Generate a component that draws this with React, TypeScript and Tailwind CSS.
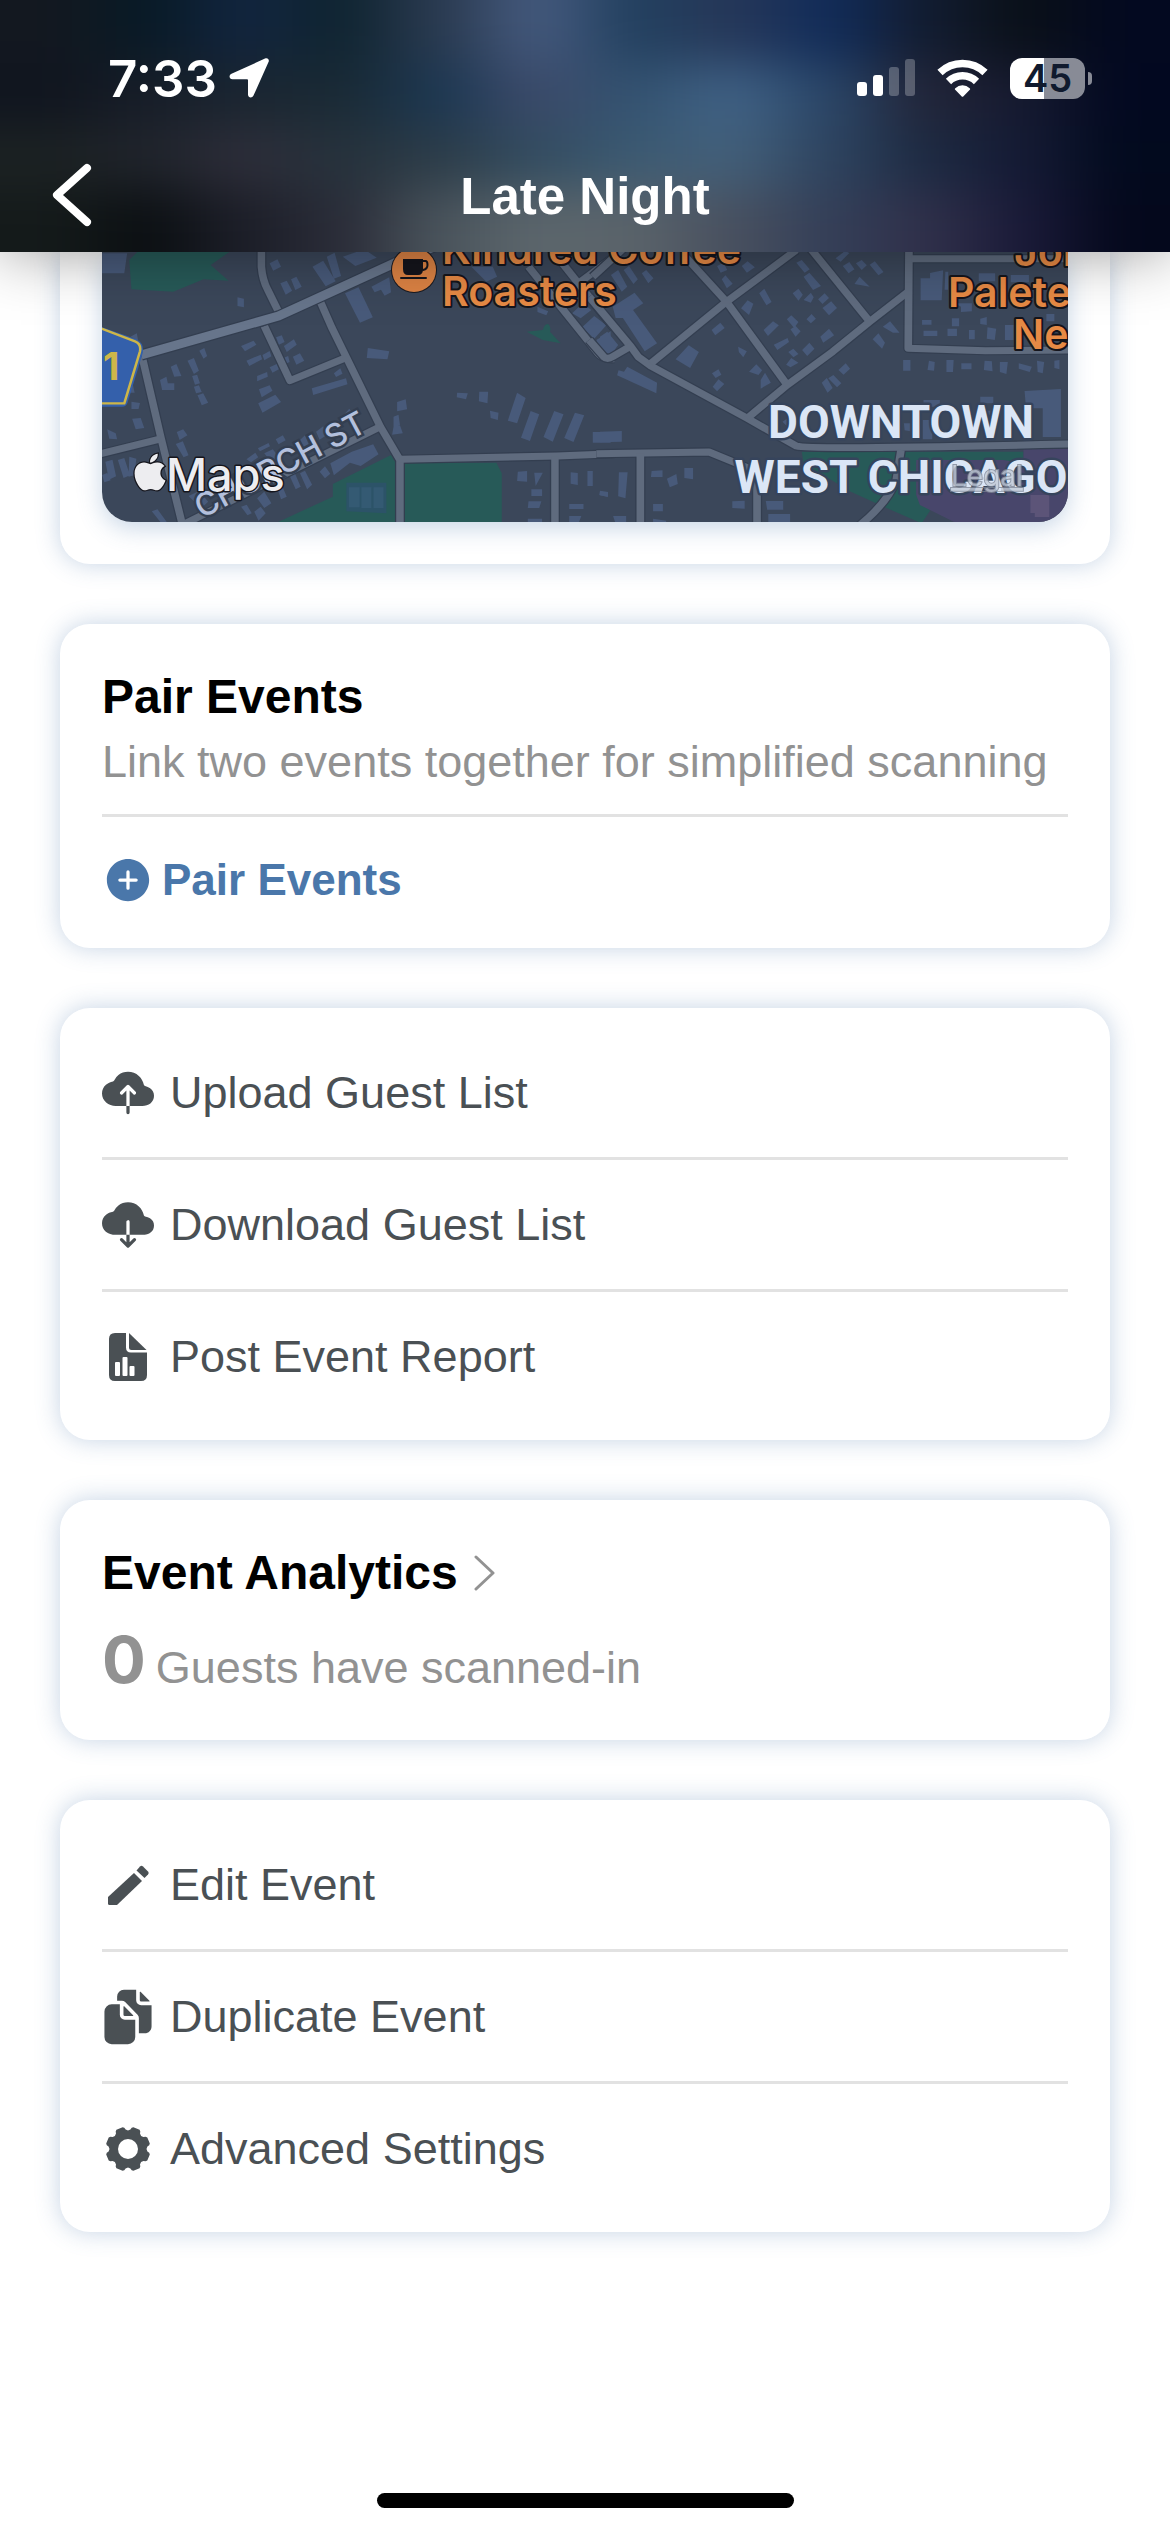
import type { ReactNode } from "react";
import { FaApple } from "react-icons/fa";
import { IoAddCircle, IoCloudDownload, IoCloudUpload, IoDocuments } from "react-icons/io5";

const headerTones = [
  ["#131820", "#081a26", "#12253f", "#0f2430", "#2a3a50", "#455a7e", "#22405f", "#263758", "#112c5a", "#121c30", "#0a1018", "#030920"],
  ["#10151f", "#171d28", "#1a2530", "#1a2a35", "#1b3752", "#3c4a6a", "#335270", "#406286", "#2a4668", "#232538", "#161a30", "#020820"],
  ["#1c2223", "#20242c", "#2e2e3a", "#26323c", "#2c3c48", "#324c60", "#3c5a72", "#43607a", "#2e4460", "#1c2a42", "#141a34", "#020a1e"],
  ["#141a1a", "#0b0f12", "#1c1e28", "#2a2c38", "#4a545c", "#5c666c", "#5a636a", "#48505f", "#343f58", "#30304a", "#1a1a38", "#04081c"],
];

function HeaderBackdrop() {
  return (
    <svg className="absolute inset-0 h-full w-full" viewBox="0 0 1170 252" preserveAspectRatio="none" aria-hidden="true">
      <defs>
        <filter id="soft" filterUnits="userSpaceOnUse" x="-150" y="-150" width="1470" height="552" colorInterpolationFilters="sRGB">
          <feGaussianBlur stdDeviation="38 24" />
        </filter>
      </defs>
      <g filter="url(#soft)">
        {headerTones.map((row, r) =>
          row.map((tone, c) => {
            const left = c === 0 ? -150 : c * 97.5;
            const right = c === 11 ? 1320 : (c + 1) * 97.5 + 1;
            const top = r === 0 ? -150 : r * 63;
            const bottom = r === 3 ? 402 : (r + 1) * 63 + 1;
            return <rect key={`${r}-${c}`} x={left} y={top} width={right - left} height={bottom - top} fill={tone} />;
          }),
        )}
      </g>
    </svg>
  );
}

function StatusBar() {
  return (
    <div className="relative flex h-[156px] items-center justify-between pr-[78px] pl-[108px]">
      <div className="flex items-center gap-3">
        <time className="font-['Inter'] text-[51px] leading-none font-semibold">7:33</time>
        <svg className="h-10 w-10" viewBox="0 0 40 40" fill="currentColor" aria-label="Location">
          <path d="M36 .6c2.600-1.200 4.700.9 3.500 3.500L24.500 37.500c-1.400 3.100-5.500 2.300-5.500-1V22.500c0-.8-.4-1.200-1.200-1.200H3.500c-3.300 0-4.100-4.100-1-5.500z" />
        </svg>
      </div>
      <div className="flex items-center gap-[22px]">
        <svg className="h-[38px] w-[58px]" viewBox="0 0 58 38" fill="currentColor" aria-label="Signal">
          <rect x="0" y="23" width="10" height="14" rx="3" />
          <rect x="16" y="16" width="10" height="21" rx="3" />
          <rect x="32" y="8" width="10" height="29" rx="3" opacity=".25" />
          <rect x="48" y="0" width="10" height="37" rx="3" opacity=".25" />
        </svg>
        <svg className="h-[38px] w-[51px]" viewBox="0 0 51 38" aria-label="Wi-Fi">
          <g fill="none" stroke="currentColor" strokeWidth="7.500">
            <path d="M3 13.500a32.500 32.500 0 0 1 45 0" />
            <path d="M11.500 22.500a20 20 0 0 1 28 0" />
          </g>
          <path fill="currentColor" d="M18.300 29.200a10.500 10.500 0 0 1 14.400 0c.6.6.6 1 .1 1.500l-6.300 6.500c-.7.7-1.300.7-2 0l-6.300-6.500c-.5-.5-.5-.9.1-1.500z" />
        </svg>
        <div className="flex items-center gap-[3px]" aria-label="Battery">
          <div className="flex h-[41px] w-[75px] items-center justify-center rounded-[12px] bg-linear-to-r from-white from-45% to-[#888b96] to-45% font-['Inter'] text-[38px] leading-none font-semibold text-[#101a2e]">
            45
          </div>
          <div className="h-[13px] w-1 rounded-r-full bg-[#888b96]" />
        </div>
      </div>
    </div>
  );
}

function Header() {
  return (
    <header className="relative z-10 h-[252px] text-white shadow-[0_0_60px_rgba(0,0,0,0.4)]">
      <HeaderBackdrop />
      <StatusBar />
      <div className="relative grid grid-cols-[1fr_auto_1fr] items-center px-[50px]">
        <button type="button" aria-label="Back" className="justify-self-start">
          <svg className="h-[78px] w-[44px]" viewBox="0 0 44 78" fill="none" stroke="currentColor" strokeWidth="8" strokeLinecap="round" strokeLinejoin="round">
            <path d="M37 12 7 39l30 27" />
          </svg>
        </button>
        <h1 className="pt-1 text-[51px] leading-[60px] font-bold">Late Night</h1>
      </div>
    </header>
  );
}

const leftRoads = [
  "M592 20V80Q595 120 610 150L640 215",
  "M600 258 672 422 825 355",
  "M757 185 790 265 925 560 980 660V860",
  "M258 350 310 590 372 860",
  "M140 642 310 597",
  "M380 850 925 560",
  "M980 658 1420 648 1580 641",
  "M1414 650V860",
  "M1340 80 1535 340Q1548 358 1580 356",
  "M1435 70 1580 265",
  "M1480 130 1580 50",
];
const rightRoads = [
  "M-10 641 300 636 432 695V860",
  "M-30 170 85 320 105 350 140 378 405 535 540 618Q580 630 1300 612",
  "M-30 300 10 350Q20 360 35 350L85 318",
  "M-20 110 70 20",
  "M235 50 348 185 515 435",
  "M140 370 348 185 540 30",
  "M575 20 742 245",
  "M405 535 515 435 640 335 742 245 848 155",
  "M850 20 848 325 1060 332 1300 330",
  "M858 56H1300",
  "M111 640V860",
  "M828 630 815 720Q790 790 710 860",
];
const leftBuildings =
  "M146 40h70l-8 60h-62zM735 80l30-18 35 62-28 15zM775 50l22-12 18 70-20 8zM820 50l60-22 35 25-60 25zM615 70l22-12 10 22-22 12zM645 130l18-8 15 30-18 12zM675 118l15-8 15 30-18 10zM525 172l18 4v26l-18-4zM826 160l38-18 40 90-36 16zM900 140l50-28 5 45-18 10-10-18-18 8zM1180 80l60 0 12 30-30 15zM1365 200l30 14-5 12-25-10zM890 324l60 10-5 24-58-4zM535 318l35-16 8 12-32 20zM633 292l16-6 8 20-16 8zM655 318l28-20 8 16-28 22zM550 362l40-18 4 14-36 20zM595 345l20-12 5 16-20 12zM645 358l22-10 4 18-20 10zM680 350l20-10 12 22-22 12zM615 382l20-10 6 16-18 10zM580 408l28-12 2 14-30 14zM585 448l30-12 8 16-30 20zM583 490l48-26 16 22-52 32zM733 445l96-30 4 18-96 32zM795 400l18-15 6 16-18 10zM418 332l14-8 8 24-10 8zM338 380l16-8 14 36-20 2zM385 362l18-8 14 38-14 10zM398 408l14-4 8 26-14 4zM403 440l14-4 8 20-16 4zM413 466l16-6 14 28-18 8zM308 420l18-10 4 20 18 0v20h-34zM225 290l18-10 4 22zM225 400l12 58h-14zM228 485l24 4-4 18h-20zM230 536l24-2 10 30-24 4zM160 568l24 12 4 18-22-2zM146 705l14-6 10 22-18 6zM155 665l20-6 10 50-20 10zM190 660l18-6 16 52-18 8zM222 650l20 6-6 50-16 4zM355 576l18-8 12 18-22 14zM352 612l20-8 16 42-14 6zM388 768l30-15 25 32-20 20zM285 814l16-6 26 38h-18zM808 542l30-36 16 22-30 16zM745 575l20-16 10 26-20 14zM632 598l20-12 8 15-20 12zM582 625l30-16 4 10-28 15zM550 658l25-20 8 14-20 15zM570 700l20-20 10 14-22 22zM535 800l18 26 12-6-14-26zM572 815l18-15 14 20-20 22zM600 640l24-12 20 28-22 14zM700 600l14-14 10 26-14 8zM755 695l15-16 15 22-15 14zM785 670l60-35 60-22 15 30-50 35-30-10-45 38zM580 775l20-20 20 35-20 14zM635 740l12-10 16 40-16 8zM670 705l14-10 18 45-14 8zM700 700l14-8 20 42-14 14zM972 486l24-8 4 30-28 6zM962 530l14-6 4 30-18 10zM962 560l18-4 8 24-30 4zM1140 458l30 2-5 18-26-6zM1202 455h25l-2 35-24-6zM1232 512l24 6-2 22-20-6zM1308 458l24 16-24 76-26-8zM1346 513l24 10-26 80-25-10zM1412 513l26 10-30 82-26-14zM1470 518l26 8-30 80-26-12zM1520 576h50v32h-50zM1310 695l26-2v32l-28-2zM1356 698h24l-20 40zM1348 748h30v20h-30zM1340 784h36l-6 20h-32zM1338 836h40v14h-40zM1458 697l20 2v36l-20-4zM1505 693h15v45h-15zM1454 792h40v15h-40zM1454 828h34l-8 22h-26zM1540 753l22 6v12l-24-6zM1462 220l30-30 24 20-30 25zM1490 262l34-34 34 28-34 40zM1530 300l40-26v50l-28 10z";
const rightBuildings =
  "M30 105l20-15 25 50-15 15zM65 90l15-12 24 40-12 14zM115 100l12-10 20 25-14 15zM35 200l60-42 24 32-28 20 66 100-34 24-60-100-20 0zM0 290l20-15 30 40-20 30-30-15zM208 358l36-42 28 20-24 48zM75 380l82 48-2 32-108-54 4-15 15 4zM307 270l24-22 12 16-26 22zM380 320l24 14-10 18-12-16zM322 78l18-10 10 22-18 8zM390 78l16-14 20 18-22 16zM335 118l10-12 20 25-16 14zM540 68l15-8 22 28-14 10zM560 110l16-12 32 40-22 12zM388 205l18-24 16 10-12 34zM438 160l14-14 20 40-14 10zM530 160l16-14 12 18-12 18zM560 180l20-22 8 14-8 16zM600 178l18-18 12 14-18 18zM612 204l24-20 16 20-22 22zM450 270l26-26 16 12-30 32zM514 238l12-12 20 20-12 18zM524 268l14-10 14 16-14 16zM568 238l14-16 12 14-14 14zM478 314l38-20 4 12-32 24zM556 330l20-22 14 18-20 22zM606 290l24-24 14 20-30 22zM518 336l14-10 14 16-14 10zM512 374l14-20 20 14-22 14zM648 55l26-22 12 6-24 26zM668 78l18-12 14 22-16 12zM704 70l16-10 14 16-14 14zM742 74l14-10 24 32-14 10zM700 132l14-22 28 30zM778 260l20-16 26 34-18 0zM750 298l16-18 18 28-8 18zM308 400l18-12 8 16-16 10zM310 440l16-22 16 14-20 22zM410 395l20-22 16 18-10 14zM442 420l12-22 16 30-28 18zM610 428l14-14 16 30-14 14zM628 415l14-10 22 25-12 12zM656 390l20-20 12 16-18 18zM882 115h26v-16l36-8-4 90h-58zM950 95l8 0v54h-10zM1042 100h45v24h-45zM1130 105h50v22h-50zM975 190h48v24l-30 2v-16zM886 240h26v14h-26zM968 235h20v24h-20zM1046 236l18-5v24l-18-3zM890 272h38v16h-38zM956 266h26v22h-26zM1015 270h16v28h-16zM1066 262l24 4-4 34-22-4zM1114 255h24v45h-24zM1228 222h22v22h-22zM834 360h20v32h-20zM905 362l16 4-2 26-18-2zM953 360h20l-2 36h-18zM994 370h28v18h-28zM1058 362l20 2 2 30-24-4zM1100 366h22l-4 36-18-6zM1152 370l36 10-6 16-30-10zM1202 362l20 4-4 34-14-4zM1250 362l14-2v28l-14-4zM1168 453l100-6v144h-50v-86h-46zM1046 470h36v20h-36zM890 480h45v20h-45zM740 525l14 10v45l-6 2zM836 550h26v25l-24-4zM888 540h26v58h-26zM1046 512h34v14h-34zM502 545l14-10v25zM0 575l60-2v32l-60 2zM52 697h24l-6 78-20-6zM142 693l30-2v20h-32zM184 716l26-14 4 30-22 10zM232 684h24v34l-24-4zM0 752l22 4v14l-22-4zM146 792h27v22h-27zM36 828h36v20h-30zM146 836l36 6v8h-36zM364 784l34-2v24l-34-2zM456 783h48v26h-44zM463 822h60v26h-60z";

function EventMap() {
  return (
    <svg className="block w-full rounded-b-[30px] shadow-[0_6px_24px_rgba(74,119,171,0.3)]" viewBox="0 0 966 270" role="img" aria-label="Map of Downtown West Chicago">
      <rect width="966" height="270" fill="#3b475a" />
      <g transform="translate(-52 -12) scale(.3571 .3333)" strokeLinejoin="round">
        <path fill="#275a58" d="M222 60 250 30H510L450 75 500 122 430 118 345 155 228 148zM635 848 792 770V732L955 645 985 700V850zM990 668H1250L1265 700V850H990zM1335 275 1380 270Q1385 250 1395 252 1405 262 1400 275L1430 310 1380 300z" />
        <path fill="#485a7a" d={leftBuildings} />
        <path fill="#2c5368" d="M830 728h112v92l-112-6z" />
        <path fill="#345a73" d="M837 742h30v60h-30zM872 742h28v62h-28zM906 742h28v62h-28z" />
        {leftRoads.map((d) => (
          <path key={d} d={d} fill="none" stroke="#333e50" strokeWidth="28" />
        ))}
        {leftRoads.map((d) => (
          <path key={d} d={d} fill="none" stroke="#5f6b7e" strokeWidth="21" />
        ))}
        <path d="M255 345 640 228 980 62 1100 10" fill="none" stroke="#333e50" strokeWidth="34" />
        <path d="M255 345 640 228 980 62 1100 10" fill="none" stroke="#67758b" strokeWidth="27" />
        <path d="M130 256 242 298Q264 310 260 338L217 488Q213 500 202 500H130z" fill="#3460ab" />
        <path d="M130 260 238 304Q256 312 252 334L208 490H130" fill="none" stroke="#cdb648" strokeWidth="7" />
      </g>
      <g transform="translate(498 -12) scale(.3635 .3333)" strokeLinejoin="round">
        <path fill="#275a58" d="M555 635H1165V670H870V765L908 812 885 850 790 805 690 755 560 670z" />
        <path fill="#48466b" d="M1165 625H1300V860H1000L880 795 870 765V660H1110L1165 670z" />
        <path fill="#5c5478" d="M1184 765h52v66h-40v-12h-12z" />
        <path fill="#485a7a" d={rightBuildings} />
        {rightRoads.map((d) => (
          <path key={d} d={d} fill="none" stroke="#333e50" strokeWidth="28" />
        ))}
        {rightRoads.map((d) => (
          <path key={d} d={d} fill="none" stroke="#5f6b7e" strokeWidth="21" />
        ))}
      </g>

      <text x="1" y="128" className="font-['Inter'] text-[38px] font-bold" fill="#cdb648">1</text>
      <circle cx="312" cy="18" r="23" fill="#1a1a20" />
      <circle cx="312" cy="18" r="22" fill="#dd8344" />
      <path d="M301 7h20v10q0 6-5 6h-10q-5 0-5-6z" fill="#15151c" />
      <path d="M320 9h3.500q2 0 2 4t-4.500 5M299 26h25" fill="none" stroke="#15151c" strokeWidth="2" strokeLinecap="round" />

      <g className="font-['Inter'] text-[41px] font-semibold" fill="#e78a45" stroke="#15151c" strokeWidth="4" paintOrder="stroke" strokeLinejoin="round">
        <text x="340" y="12">Kindred Coffee</text>
        <text x="340" y="54">Roasters</text>
        <text x="912" y="14">Jol</text>
        <text x="846" y="55">Palete</text>
        <text x="911" y="97">Ne</text>
      </g>

      <text transform="translate(100 267) rotate(-28)" className="font-['Inter'] text-[32px] font-medium" fill="#b3c0dd" stroke="#333e50" strokeWidth="5" paintOrder="stroke">
        CHURCH ST
      </text>

      <g className="font-['Roboto'] text-[46px] font-bold" fill="#dbe6f6" stroke="#36445c" strokeWidth="5" paintOrder="stroke" textAnchor="middle" strokeLinejoin="round">
        <text x="799" y="186">DOWNTOWN</text>
        <text x="799" y="241">WEST CHICAGO</text>
      </g>

      <FaApple x="27" y="199" size={42} fill="#ededf0" stroke="#15151c" strokeWidth="30" style={{ paintOrder: "stroke" }} />
      <text x="64" y="239" className="font-['Inter'] text-[45px] font-medium" fill="#ededf0" stroke="#15151c" strokeWidth="3" paintOrder="stroke" strokeLinejoin="round">
        Maps
      </text>
      <a href="#legal">
        <text x="849" y="234" className="font-['Inter'] text-[28px] underline" fill="#c3cbd8" stroke="#7f8796" strokeWidth="2" paintOrder="stroke" opacity=".8">
          Legal
        </text>
      </a>
    </svg>
  );
}

function Card({ className = "", children }: { className?: string; children: ReactNode }) {
  return (
    <section className={`rounded-[30px] bg-white px-[42px] shadow-[0_0_24px_rgba(74,119,171,0.32)] ${className}`}>{children}</section>
  );
}

function ReportIcon() {
  return (
    <svg className="h-[50px] w-[50px]" viewBox="0 0 50 50" fill="currentColor">
      <path d="M12 1h11v14.500q0 5 5 5h16V43q0 6-6 6H12q-6 0-6-6V7q0-6 6-6z" />
      <path d="M26 1 43.500 18H28.500q-2.500 0-2.500-2.500z" />
      <g fill="white">
        <rect x="12" y="30" width="5" height="14" rx="1" />
        <rect x="19.500" y="25" width="5" height="19" rx="1" />
        <rect x="26.500" y="34" width="5" height="10" rx="1" />
      </g>
    </svg>
  );
}

function PencilIcon() {
  return (
    <svg className="h-[50px] w-[50px]" viewBox="0 0 50 50" fill="currentColor">
      <path d="M31 13 39 21 14 45H6.500Q5 45 5 43.500V37z" />
      <path d="M33.500 10.500 37 6.500Q38.500 5 40 6.500L45 11.500Q46.500 13 45 14.500L41.500 18z" />
    </svg>
  );
}

const gearPoints = Array.from({ length: 8 }, (_, i) => {
  const at = (deg: number, r: number) => {
    const a = ((deg + i * 45) * Math.PI) / 180;
    return `${(25 + r * Math.cos(a)).toFixed(1)},${(25 + r * Math.sin(a)).toFixed(1)}`;
  };
  return [at(10, 21.5), at(14, 22.5), at(31, 22.5), at(35, 21.5), at(38, 19.5), at(45, 18.5), at(52, 19.5)].join(" ");
}).join(" ");

function GearIcon() {
  return (
    <svg className="h-[50px] w-[50px]" viewBox="0 0 50 50" fill="currentColor">
      <polygon points={gearPoints} />
      <circle cx="25" cy="25" r="10" fill="white" />
    </svg>
  );
}

type Action = { label: string; icon: ReactNode };

function ActionList({ actions }: { actions: Action[] }) {
  return (
    <Card className="pt-5 pb-[19px] text-[#4a5054]">
      <ul className="divide-y-3 divide-[#e2e2e2]">
        {actions.map(({ label, icon }) => (
          <li key={label}>
            <button type="button" className="flex h-[129px] w-full items-center gap-4 text-left text-[45px]">
              <span className="flex w-[52px] justify-center">{icon}</span>
              {label}
            </button>
          </li>
        ))}
      </ul>
    </Card>
  );
}

const guestActions: Action[] = [
  { label: "Upload Guest List", icon: <IoCloudUpload size={52} /> },
  { label: "Download Guest List", icon: <IoCloudDownload size={52} /> },
  { label: "Post Event Report", icon: <ReportIcon /> },
];

const eventActions: Action[] = [
  { label: "Edit Event", icon: <PencilIcon /> },
  { label: "Duplicate Event", icon: <IoDocuments size={58} className="shrink-0" /> },
  { label: "Advanced Settings", icon: <GearIcon /> },
];

export default function App() {
  return (
    <div className="flex min-h-screen flex-col bg-white font-['Liberation_Sans',Arial,sans-serif]">
      <Header />
      <main className="flex flex-1 flex-col gap-[60px] px-[60px]">
        <Card className="rounded-t-none pb-[42px]">
          <EventMap />
        </Card>

        <Card className="pt-[44px] pb-[5px]">
          <h2 className="text-[48px] leading-[58px] font-bold">Pair Events</h2>
          <p className="border-b-3 border-[#e2e2e2] pt-2 pb-6 text-[45px] leading-[56px] text-[#929292]">
            Link two events together for simplified scanning
          </p>
          <button type="button" className="flex h-[126px] w-full items-center gap-2 text-left text-[44px] font-bold text-[#4a77aa]">
            <IoAddCircle size={52} />
            Pair Events
          </button>
        </Card>

        <ActionList actions={guestActions} />

        <Card className="pt-[44px] pb-8">
          <h2>
            <button type="button" className="flex items-center gap-4 text-[48px] leading-[58px] font-bold">
              Event Analytics
              <svg className="h-[38px] w-[22px]" viewBox="0 0 22 38" fill="none" stroke="#929292" strokeWidth="3" strokeLinecap="round" strokeLinejoin="round">
                <path d="M2 3 19 19 2 35" />
              </svg>
            </button>
          </h2>
          <p className="flex items-baseline gap-[10px] pt-[18px] text-[45px] leading-[80px] text-[#929292]">
            <strong className="font-['Inter'] text-[65px] font-bold">0</strong>
            Guests have scanned-in
          </p>
        </Card>

        <ActionList actions={eventActions} />
      </main>
      <footer className="flex justify-center pb-6">
        <div className="h-[15px] w-[417px] rounded-full bg-black" />
      </footer>
    </div>
  );
}
